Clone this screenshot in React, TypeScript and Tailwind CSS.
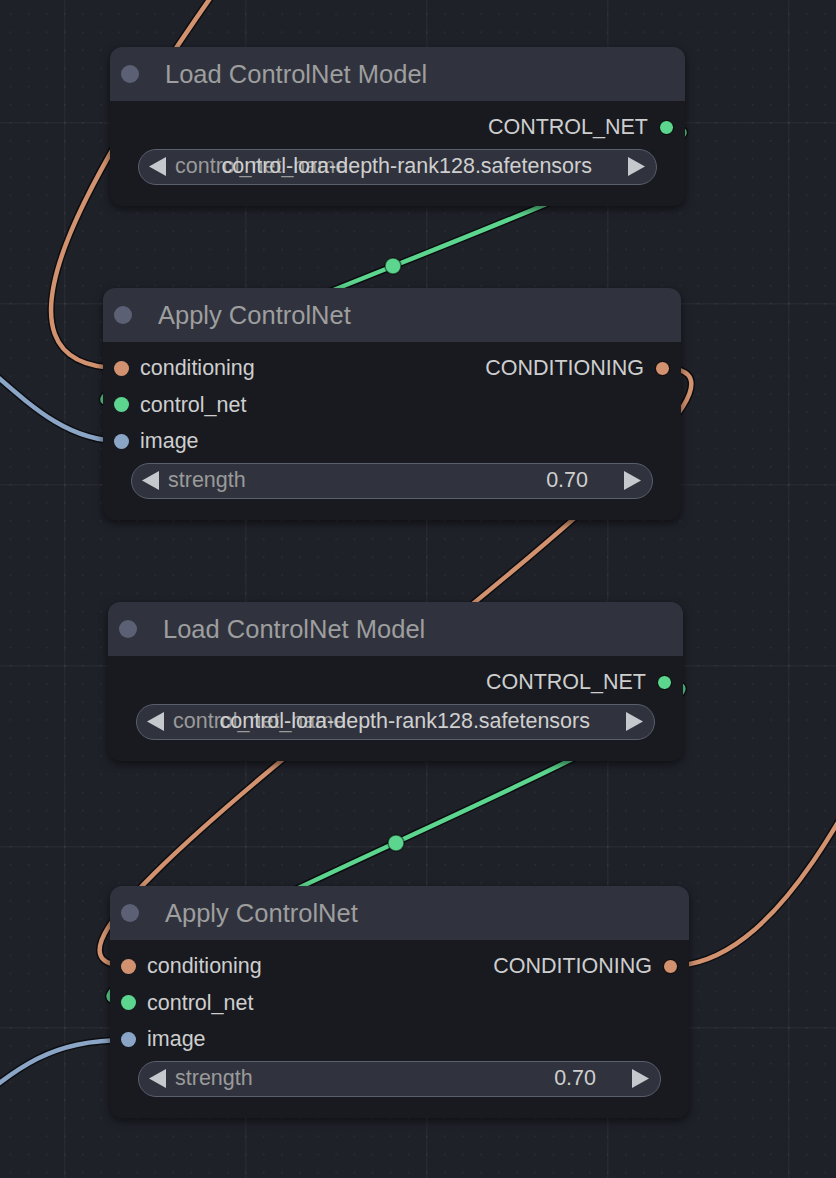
import React from "react";

type Slot = { name: string; color: string };

type NodeSpec = {
  title: string;
  x: number;
  y: number;
  w: number;
  inputs: Slot[];
  output: Slot;
  widget: { label: string; value: string };
};

const ORANGE = "#d3926f";
const GREEN = "#5cd58e";
const BLUE = "#8ba5c6";

const NODES: NodeSpec[] = [
  {
    title: "Load ControlNet Model",
    x: 110,
    y: 47,
    w: 575,
    inputs: [],
    output: { name: "CONTROL_NET", color: GREEN },
    widget: { label: "control_net_name", value: "control-lora-depth-rank128.safetensors" },
  },
  {
    title: "Apply ControlNet",
    x: 103,
    y: 288,
    w: 578,
    inputs: [
      { name: "conditioning", color: ORANGE },
      { name: "control_net", color: GREEN },
      { name: "image", color: BLUE },
    ],
    output: { name: "CONDITIONING", color: ORANGE },
    widget: { label: "strength", value: "0.70" },
  },
  {
    title: "Load ControlNet Model",
    x: 108,
    y: 602,
    w: 575,
    inputs: [],
    output: { name: "CONTROL_NET", color: GREEN },
    widget: { label: "control_net_name", value: "control-lora-depth-rank128.safetensors" },
  },
  {
    title: "Apply ControlNet",
    x: 110,
    y: 886,
    w: 579,
    inputs: [
      { name: "conditioning", color: ORANGE },
      { name: "control_net", color: GREEN },
      { name: "image", color: BLUE },
    ],
    output: { name: "CONDITIONING", color: ORANGE },
    widget: { label: "strength", value: "0.70" },
  },
];

// litegraph style spline: leaves the output to the right, enters the input from the left
function link(x0: number, y0: number, x1: number, y1: number) {
  const d = Math.hypot(x1 - x0, y1 - y0) * 0.25;
  return `M ${x0} ${y0} C ${x0 + d} ${y0}, ${x1 - d} ${y1}, ${x1} ${y1}`;
}

const WIRES = [
  { d: "M 230 -30 C 88 170, -29 368, 121 368", color: ORANGE },
  { d: "M -60 330 C 10 380, 50 441, 121 441", color: BLUE },
  { d: link(666, 127, 121, 405), color: GREEN, mid: [393, 266] },
  { d: link(663, 368, 128, 966), color: ORANGE },
  { d: link(664, 682, 128, 1003), color: GREEN, mid: [396, 843] },
  { d: "M -40 1115 C 20 1065, 50 1040, 128 1040", color: BLUE },
  { d: "M 670 966 C 883 966, 987 300, 1200 300", color: ORANGE },
];

function Arrow({ dir }: { dir: "left" | "right" }) {
  return (
    <svg width="17" height="19" viewBox="0 0 17 19" className="shrink-0">
      <polygon
        points={dir === "left" ? "17,0 17,19 0,9.5" : "0,0 0,19 17,9.5"}
        fill="#c5c8cc"
      />
    </svg>
  );
}

function Widget({ label, value }: { label: string; value: string }) {
  return (
    <div className="mx-[28px] mt-[3px] flex h-[36px] items-center rounded-full border-[1.5px] border-[#5a5f6d] bg-[#30333d] pl-[10px] pr-[11px] text-[21.5px]">
      <Arrow dir="left" />
      <div className="ml-[9px] w-0 whitespace-nowrap text-[#9a9a9a]">{label}</div>
      <div className="ml-auto whitespace-nowrap text-[#cfcfcf]">{value}</div>
      <div className="ml-[36px]">
        <Arrow dir="right" />
      </div>
    </div>
  );
}

function Node({ node }: { node: NodeSpec }) {
  const rows = Math.max(node.inputs.length, 1);
  return (
    <div
      className="absolute overflow-hidden rounded-[12px] bg-[#181a20] shadow-[0_3px_8px_rgba(0,0,0,0.55)]"
      style={{ left: node.x, top: node.y, width: node.w }}
    >
      <div className="flex h-[54px] items-center bg-[#30333e]">
        <div className="ml-[11px] h-[18px] w-[18px] rounded-full bg-[#5b6075]" />
        <div className="ml-[26px] text-[25.5px] text-[#9e9e9e]">{node.title}</div>
      </div>
      <div className="pb-[21px] pt-[8px]">
        {Array.from({ length: rows }).map((_, i) => {
          const input = node.inputs[i];
          return (
            <div key={i} className="flex h-[36.5px] items-center text-[21.5px] text-[#cecece]">
              {input ? (
                <>
                  <div
                    className="ml-[10.5px] h-[15px] w-[15px] rounded-full"
                    style={{ backgroundColor: input.color }}
                  />
                  <div className="ml-[11.5px]">{input.name}</div>
                </>
              ) : null}
              {i === 0 ? (
                <>
                  <div className="ml-auto">{node.output.name}</div>
                  <div
                    className="ml-[11px] mr-[11px] h-[15px] w-[15px] rounded-full border-[1.5px] border-black"
                    style={{ backgroundColor: node.output.color }}
                  />
                </>
              ) : null}
            </div>
          );
        })}
        <Widget label={node.widget.label} value={node.widget.value} />
      </div>
    </div>
  );
}

export default function App() {
  return (
    <div className="relative h-[1178px] w-[836px] overflow-hidden bg-[#1f2129] font-['Liberation_Sans',Arial,sans-serif]">
      <svg className="absolute inset-0" width="836" height="1178">
        <defs>
          <pattern id="minor" x="64" y="122" width="18.1" height="18.1" patternUnits="userSpaceOnUse">
            <rect x="-1" y="0" width="3" height="1" fill="rgba(255,255,255,0.035)" />
            <rect x="0" y="-1" width="1" height="3" fill="rgba(255,255,255,0.035)" />
          </pattern>
          <pattern id="major" x="64" y="122" width="181" height="181" patternUnits="userSpaceOnUse">
            <rect x="0" y="0" width="1.5" height="181" fill="rgba(255,255,255,0.035)" />
            <rect x="0" y="0" width="181" height="1.5" fill="rgba(255,255,255,0.035)" />
          </pattern>
        </defs>
        <rect width="836" height="1178" fill="url(#minor)" />
        <rect width="836" height="1178" fill="url(#major)" />
        {WIRES.map((w, i) => (
          <g key={i}>
            <path d={w.d} fill="none" stroke="rgba(0,0,0,0.6)" strokeWidth="7.5" />
            <path d={w.d} fill="none" stroke={w.color} strokeWidth="4.5" />
            {w.mid ? (
              <circle cx={w.mid[0]} cy={w.mid[1]} r="8" fill={w.color} stroke="rgba(0,0,0,0.5)" strokeWidth="1.5" />
            ) : null}
          </g>
        ))}
      </svg>
      {NODES.map((n, i) => (
        <Node key={i} node={n} />
      ))}
    </div>
  );
}
